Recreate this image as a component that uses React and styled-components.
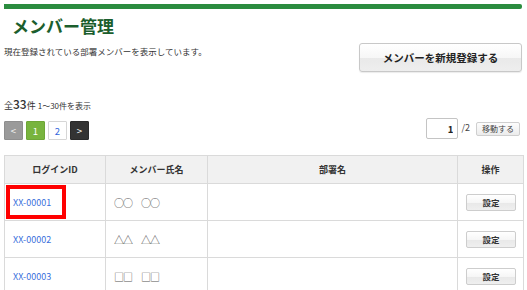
import React from "react";
import styled, { createGlobalStyle } from "styled-components";

const GlobalStyle = createGlobalStyle`
  body {
    margin: 0;
    background: #fff;
    font-family: "Noto Sans CJK JP", "Noto Sans", sans-serif;
    color: #333;
  }
`;

const members = [
  { id: "XX-00001", name: "○○　○○", dept: "", marked: true },
  { id: "XX-00002", name: "△△　△△", dept: "" },
  { id: "XX-00003", name: "□□　□□", dept: "" },
];

export default function App() {
  return (
    <Page>
      <GlobalStyle />
      <GreenBar />
      <Title>メンバー管理</Title>
      <IntroRow>
        <Intro>現在登録されている部署メンバーを表示しています。</Intro>
        <RegisterButton>メンバーを新規登録する</RegisterButton>
      </IntroRow>
      <Count>
        全<Big>33</Big>件 <Small>1〜30件を表示</Small>
      </Count>
      <PagerRow>
        <Pager>
          <PageBox kind="prev">&lt;</PageBox>
          <PageBox kind="current">1</PageBox>
          <PageBox kind="link">2</PageBox>
          <PageBox kind="next">&gt;</PageBox>
        </Pager>
        <Jump>
          <PageInput defaultValue="1" />
          <Total>/2</Total>
          <MoveButton>移動する</MoveButton>
        </Jump>
      </PagerRow>
      <Table>
        <colgroup>
          <col style={{ width: 101 }} />
          <col style={{ width: 102 }} />
          <col style={{ width: 250 }} />
          <col style={{ width: 66 }} />
        </colgroup>
        <thead>
          <tr>
            <Th>ログインID</Th>
            <Th>メンバー氏名</Th>
            <Th>部署名</Th>
            <Th>操作</Th>
          </tr>
        </thead>
        <tbody>
          {members.map((m) => (
            <tr key={m.id}>
              <IdCell>
                <IdLink href="#">{m.id}</IdLink>
                {m.marked && <Highlight />}
              </IdCell>
              <NameCell>{m.name}</NameCell>
              <Td>{m.dept}</Td>
              <Td center>
                <SetButton>設定</SetButton>
              </Td>
            </tr>
          ))}
        </tbody>
      </Table>
    </Page>
  );
}

const Page = styled.div`
  width: 527px;
  box-sizing: border-box;
  padding: 4px 4px 0 4px;
`;

const GreenBar = styled.div`
  height: 5px;
  margin-right: 1px;
  background: #2b8c3f;
  border-radius: 0 2px 2px 0;
`;

const Title = styled.h1`
  margin: 4px 0 0 0;
  padding-left: 8px;
  height: 26px;
  line-height: 26px;
  font-size: 17px;
  font-weight: 700;
  color: #1b5e2d;
`;

const IntroRow = styled.div`
  display: flex;
  justify-content: space-between;
  align-items: flex-start;
`;

const Intro = styled.p`
  margin: 6px 0 0 0;
  font-size: 8.5px;
  line-height: 12px;
  color: #333;
`;

const RegisterButton = styled.button`
  margin: 4px 1px 0 0;
  width: 163px;
  height: 29px;
  border: 1px solid #c8c8c8;
  border-radius: 3px;
  background: linear-gradient(#ffffff 0%, #f7f7f7 50%, #e9e9e9 51%, #eeeeee 100%);
  box-shadow: 0 1px 1px rgba(0, 0, 0, 0.08);
  font-family: inherit;
  font-size: 10.5px;
  font-weight: 700;
  color: #222;
  padding: 0;
`;

const Count = styled.div`
  margin-top: 25px;
  font-size: 9px;
  line-height: 14px;
  color: #333;
`;

const Big = styled.span`
  font-size: 12px;
  font-weight: 500;
`;

const Small = styled.span`
  font-size: 8px;
`;

const PagerRow = styled.div`
  margin-top: 5px;
  display: flex;
  justify-content: space-between;
  align-items: flex-start;
`;

const Pager = styled.div`
  margin-top: 3px;
  display: flex;
  gap: 3px;
`;

const pageColors = {
  prev: { bg: "#9a9a9a", fg: "#f4f4f4", border: "#8e8e8e" },
  current: { bg: "#78b43e", fg: "#ffffff", border: "#6ea637" },
  link: { bg: "#ffffff", fg: "#3366dd", border: "#d6d6d6" },
  next: { bg: "#333333", fg: "#ffffff", border: "#2a2a2a" },
};

const PageBox = styled.span`
  width: 19px;
  height: 19px;
  box-sizing: border-box;
  display: flex;
  align-items: center;
  justify-content: center;
  font-size: 9.5px;
  background: ${(p) => pageColors[p.kind].bg};
  color: ${(p) => pageColors[p.kind].fg};
  border: 1px solid ${(p) => pageColors[p.kind].border};
  border-radius: 1px;
`;

const Jump = styled.div`
  display: flex;
  align-items: flex-start;
  margin-right: 3px;
`;

const PageInput = styled.input`
  width: 32px;
  height: 21px;
  box-sizing: border-box;
  border: 1px solid #c4c4c4;
  border-radius: 2px;
  padding: 0 4px 0 0;
  text-align: right;
  font-family: inherit;
  font-size: 9.5px;
  font-weight: 700;
  color: #222;
`;

const Total = styled.span`
  margin: 4px 6px 0 3px;
  font-size: 9px;
  line-height: 12px;
  color: #444;
`;

const MoveButton = styled.button`
  margin-top: 4px;
  width: 44px;
  height: 14px;
  padding: 0;
  border: 1px solid #cfcfcf;
  border-radius: 2px;
  background: linear-gradient(#fdfdfd, #ececec);
  font-family: inherit;
  font-size: 8px;
  line-height: 12px;
  color: #444;
`;

const Table = styled.table`
  margin-top: 15px;
  width: 519px;
  border-collapse: collapse;
  table-layout: fixed;
`;

const Th = styled.th`
  height: 27px;
  padding: 0;
  border: 1px solid #dadada;
  background: #f1f1f1;
  font-size: 9px;
  font-weight: 700;
  color: #333;
  text-align: center;
`;

const Td = styled.td`
  height: 36px;
  padding: 0 8px;
  border: 1px solid #dadada;
  font-size: 9.5px;
  color: #444;
  text-align: ${(p) => (p.center ? "center" : "left")};
  vertical-align: middle;
`;

const IdCell = styled(Td)`
  position: relative;
`;

const NameCell = styled(Td)`
  font-size: 10px;
  letter-spacing: -1px;
  color: #555;
`;

const IdLink = styled.a`
  color: #3a6fdc;
  text-decoration: none;
  font-size: 9px;
`;

const Highlight = styled.span`
  position: absolute;
  left: 1px;
  top: 1px;
  width: 60px;
  height: 34px;
  box-sizing: border-box;
  border: 4px solid #ff0000;
  pointer-events: none;
`;

const SetButton = styled.button`
  width: 50px;
  height: 17px;
  padding: 0;
  border: 1px solid #cdcdcd;
  border-radius: 2px;
  background: linear-gradient(#ffffff 0%, #f6f6f6 50%, #e8e8e8 51%, #efefef 100%);
  font-family: inherit;
  font-size: 8.5px;
  font-weight: 700;
  color: #333;
`;
